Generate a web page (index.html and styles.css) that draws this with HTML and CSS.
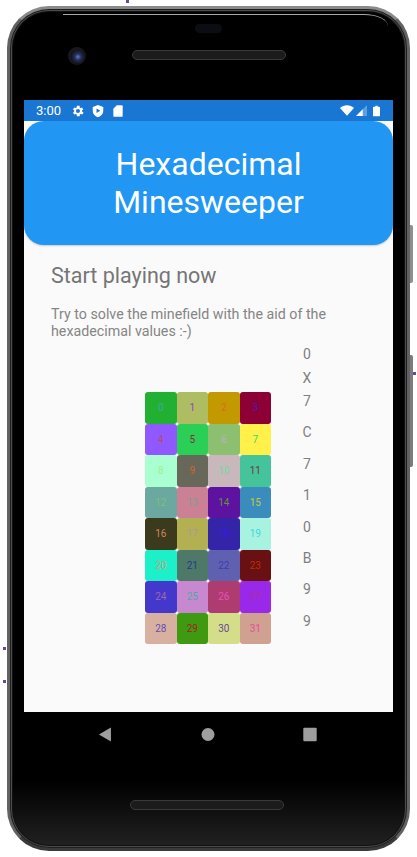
FILE: index.html
```html
<!DOCTYPE html>
<html lang="en">
<head>
    <meta charset="UTF-8">
    <meta name="viewport" content="width=device-width, initial-scale=1.0">
    <title>Hexadecimal Minesweeper</title>
    <link rel="stylesheet" href="styles.css">
</head>
<body>
    <span class="edge-mark mark-top"></span>
    <span class="edge-mark mark-left-a"></span>
    <span class="edge-mark mark-left-b"></span>
    <span class="edge-mark mark-right"></span>
    <div class="phone">
        <span class="side-button volume"></span>
        <span class="side-button power"></span>
        <div class="bezel-top">
            <span class="glass-edge"></span>
            <span class="sensor"></span>
            <span class="camera"></span>
            <span class="speaker"></span>
        </div>
        <div class="screen">
            <div class="status-bar">
                <span class="clock">3:00</span>
                <svg class="status-icon" viewBox="0 0 24 24"><path fill-rule="evenodd" d="M19.400 13a7.500 7.500 0 0 0 0-2l2.100-1.600-2-3.500-2.500 1a7.500 7.500 0 0 0-1.700-1L15.400 3.200h-4.800l-.4 2.700a7.500 7.500 0 0 0-1.700 1l-2.500-1-2 3.500L6.100 11a7.500 7.500 0 0 0 0 2l-2.100 1.600 2 3.500 2.500-1a7.500 7.500 0 0 0 1.700 1l.4 2.700h4.800l.4-2.700a7.500 7.500 0 0 0 1.700-1l2.500 1 2-3.500zM12.500 15.500a3.500 3.500 0 1 1 0-7 3.500 3.500 0 0 1 0 7z" transform="translate(-0.500 0)"/></svg>
                <svg class="status-icon" viewBox="0 0 24 24"><path fill-rule="evenodd" d="M12 1.500l9 3.500v6.500c0 5.200-3.700 9.700-9 11-5.300-1.300-9-5.800-9-11V5zM9.500 7.500v8l6.500-4z"/></svg>
                <svg class="status-icon" viewBox="0 0 24 24"><path d="M10 2h8a2 2 0 0 1 2 2v16a2 2 0 0 1-2 2H6a2 2 0 0 1-2-2V8z"/></svg>
                <span class="status-spacer"></span>
                <svg class="status-wifi" viewBox="0 0 24 18"><path d="M12 18L0 4.500C3.500 1.700 7.500 0 12 0s8.500 1.700 12 4.500z"/></svg>
                <svg class="status-cell" viewBox="0 0 18 18"><path class="cell-dim" d="M18 0v18H0z"/><path d="M11 7v11H0z"/></svg>
                <svg class="status-battery" viewBox="0 0 12 18"><path d="M4 0h4v1.500h2.500A1.500 1.500 0 0 1 12 3v13.500a1.500 1.500 0 0 1-1.500 1.500h-9A1.500 1.500 0 0 1 0 16.500V3a1.500 1.500 0 0 1 1.500-1.500H4z"/></svg>
            </div>
            <div class="app-header">
                <h1>Hexadecimal Minesweeper</h1>
            </div>
            <div class="content">
                <h2>Start playing now</h2>
                <p>Try to solve the minefield with the aid of the hexadecimal values :-)</p>
                <div class="game">
                    <div class="board">
                        <div class="cell c0">0</div>
                        <div class="cell c1">1</div>
                        <div class="cell c2">2</div>
                        <div class="cell c3">3</div>
                        <div class="cell c4">4</div>
                        <div class="cell c5">5</div>
                        <div class="cell c6">6</div>
                        <div class="cell c7">7</div>
                        <div class="cell c8">8</div>
                        <div class="cell c9">9</div>
                        <div class="cell c10">10</div>
                        <div class="cell c11">11</div>
                        <div class="cell c12">12</div>
                        <div class="cell c13">13</div>
                        <div class="cell c14">14</div>
                        <div class="cell c15">15</div>
                        <div class="cell c16">16</div>
                        <div class="cell c17">17</div>
                        <div class="cell c18">18</div>
                        <div class="cell c19">19</div>
                        <div class="cell c20">20</div>
                        <div class="cell c21">21</div>
                        <div class="cell c22">22</div>
                        <div class="cell c23">23</div>
                        <div class="cell c24">24</div>
                        <div class="cell c25">25</div>
                        <div class="cell c26">26</div>
                        <div class="cell c27">27</div>
                        <div class="cell c28">28</div>
                        <div class="cell c29">29</div>
                        <div class="cell c30">30</div>
                        <div class="cell c31">31</div>
                    </div>
                    <div class="hex-column">
                        <div class="hex-prefix">0</div>
                        <div class="hex-prefix">X</div>
                        <div class="hex-digit">7</div>
                        <div class="hex-digit">C</div>
                        <div class="hex-digit">7</div>
                        <div class="hex-digit">1</div>
                        <div class="hex-digit">0</div>
                        <div class="hex-digit">B</div>
                        <div class="hex-digit">9</div>
                        <div class="hex-digit">9</div>
                    </div>
                </div>
            </div>
        </div>
        <div class="bezel-bottom">
            <div class="nav-bar">
                <svg class="nav-icon" viewBox="0 0 14 16"><path d="M13.300 0.500v15L0.500 8z"/></svg>
                <svg class="nav-icon" viewBox="0 0 14 14"><circle cx="7" cy="7" r="6.500"/></svg>
                <svg class="nav-icon" viewBox="0 0 14 14"><rect x="0.300" y="0.300" width="13.400" height="13.400" rx="1"/></svg>
            </div>
            <span class="speaker speaker-bottom"></span>
        </div>
    </div>
</body>
</html>
```

FILE: styles.css
```css
* {
    box-sizing: border-box;
}
body {
    margin: 0;
    background: #fff;
    font-family: Roboto, "Noto Sans", sans-serif;
}
.edge-mark {
    position: absolute;
    width: 3px;
    height: 3px;
    background: #6a4a8a;
}
.mark-top {
    left: 126px;
    top: 0;
}
.mark-left-a {
    left: 3px;
    top: 647px;
}
.mark-left-b {
    left: 3px;
    top: 680px;
}
.mark-right {
    left: 413px;
    top: 372px;
}
.phone {
    position: relative;
    width: 403px;
    height: 845px;
    margin: 6px 0 0 7px;
    padding: 0 14px;
    display: flex;
    flex-direction: column;
    background: linear-gradient(#000 92%, #222 100%);
    border: 3px solid #5a5a5a;
    border-color: #8a8a8a #626262 #3a3a3a #626262;
    border-radius: 42px;
    box-shadow: inset 0 0 0 1px #1e1e1e, inset 0 0 0 2px #4c4c4c, inset 0 0 0 3px #111;
}
.side-button {
    position: absolute;
    right: -6px;
    width: 3px;
    background: #8f8f8f;
    border-radius: 0 2px 2px 0;
}
.volume {
    top: 216px;
    height: 58px;
}
.power {
    top: 346px;
    height: 112px;
    background: #7c7c7c;
}
.bezel-top {
    position: relative;
    height: 91px;
    flex: none;
    margin: 0 -14px;
}
.glass-edge {
    position: absolute;
    left: 53px;
    top: 5px;
    width: 325px;
    height: 12px;
    border-top: 1px solid #a8a8a8;
    border-top-right-radius: 24px 12px;
}
.sensor {
    position: absolute;
    left: 185px;
    top: 15px;
    width: 27px;
    height: 9px;
    background: #0b0d12;
    border-radius: 5px;
}
.camera {
    position: absolute;
    left: 58px;
    top: 38px;
    width: 18px;
    height: 18px;
    border-radius: 50%;
    background: radial-gradient(circle at 55% 55%, #6478c8 0, #25305c 22%, #14151c 48%, #20222a 100%);
}
.speaker {
    position: absolute;
    left: 122px;
    top: 41px;
    width: 154px;
    height: 10px;
    background: #1b1b1b;
    border: 1px solid #3a3a3a;
    border-radius: 5px;
}
.screen {
    height: 612px;
    flex: none;
    display: flex;
    flex-direction: column;
    background: #fafafa;
}
.status-bar {
    height: 21px;
    flex: none;
    padding: 0 13px 0 12px;
    display: flex;
    align-items: center;
    background: #1976d2;
    color: #fff;
}
.clock {
    width: 35px;
    font-size: 13px;
}
.status-icon {
    width: 14px;
    height: 14px;
    margin-right: 6px;
    fill: #fff;
}
.status-spacer {
    flex: 1;
}
.status-wifi {
    width: 14px;
    height: 11px;
    margin-right: 2px;
    fill: #fff;
}
.status-cell {
    width: 11px;
    height: 11px;
    margin-right: 6px;
    fill: #fff;
}
.cell-dim {
    opacity: 0.3;
}
.status-battery {
    width: 7px;
    height: 12px;
    fill: #fff;
}
.app-header {
    height: 124px;
    flex: none;
    display: flex;
    align-items: center;
    justify-content: center;
    background: #2196f3;
    border-radius: 20px;
    box-shadow: 0 1px 2px rgba(0,0,0,0.2);
}
h1 {
    width: 220px;
    margin: 0;
    color: #fff;
    font-size: 32px;
    font-weight: 400;
    line-height: 38.500px;
    text-align: center;
}
.content {
    padding: 18px 0 0 27px;
}
h2 {
    margin: 0;
    color: #757575;
    font-size: 21.500px;
    font-weight: 400;
    line-height: 26px;
}
.content p {
    width: 300px;
    margin: 17px 0 0;
    color: #858585;
    font-size: 14.250px;
    line-height: 17px;
}
.game {
    display: flex;
    align-items: flex-start;
    margin-top: 2px;
}
.board {
    display: grid;
    grid-template-columns: repeat(4, 31.500px);
    grid-auto-rows: 31.500px;
    margin: 50px 0 0 94px;
}
.cell {
    display: flex;
    align-items: center;
    justify-content: center;
    border-radius: 3px;
    font-size: 10px;
}
.hex-column {
    width: 12px;
    margin-left: 30px;
    color: #808080;
    font-size: 14px;
    text-align: center;
}
.hex-prefix {
    height: 24px;
    line-height: 24px;
}
.hex-digit {
    height: 31.400px;
    line-height: 22px;
}
.c0 { background: #22b033; color: #3da9a0; }
.c1 { background: #aebc62; color: #8e44d0; }
.c2 { background: #c29a00; color: #e0642a; }
.c3 { background: #8c0035; color: #4a1ac0; }
.c4 { background: #9058ff; color: #b05060; }
.c5 { background: #2ad055; color: #8a2a40; }
.c6 { background: #8cc070; color: #b8b0c0; }
.c7 { background: #fff04a; color: #30d870; }
.c8 { background: #aaffd0; color: #a0f090; }
.c9 { background: #68685a; color: #c86a28; }
.c10 { background: #c8b8bc; color: #70d8a0; }
.c11 { background: #45c49c; color: #703838; }
.c12 { background: #6aa8a0; color: #78c080; }
.c13 { background: #cc8096; color: #78a088; }
.c14 { background: #5e12a0; color: #609040; }
.c15 { background: #3a8cbc; color: #c8c840; }
.c16 { background: #3c3a1c; color: #d08858; }
.c17 { background: #b2b050; color: #a898a0; }
.c18 { background: #3424a8; color: #3a18e8; }
.c19 { background: #a8f2e0; color: #40d8e0; }
.c20 { background: #1cf0c8; color: #d89880; }
.c21 { background: #4e7868; color: #203c90; }
.c22 { background: #6060b0; color: #4038b8; }
.c23 { background: #681012; color: #b83008; }
.c24 { background: #4438cc; color: #9868b0; }
.c25 { background: #c888d0; color: #50a8a0; }
.c26 { background: #ae3c70; color: #e850b8; }
.c27 { background: #9a28e8; color: #a83098; }
.c28 { background: #d8b0a0; color: #6050b8; }
.c29 { background: #3e9a10; color: #a82020; }
.c30 { background: #d4de88; color: #6848a0; }
.c31 { background: #d0a090; color: #e05098; }
.bezel-bottom {
    position: relative;
    flex: 1;
    margin: 0 -14px;
}
.nav-bar {
    display: flex;
    justify-content: space-between;
    padding: 15px 90px 0 88px;
}
.nav-icon {
    width: 14px;
    height: 15px;
    fill: #9e9e9e;
}
.speaker-bottom {
    left: 120px;
    top: 88px;
}
```
